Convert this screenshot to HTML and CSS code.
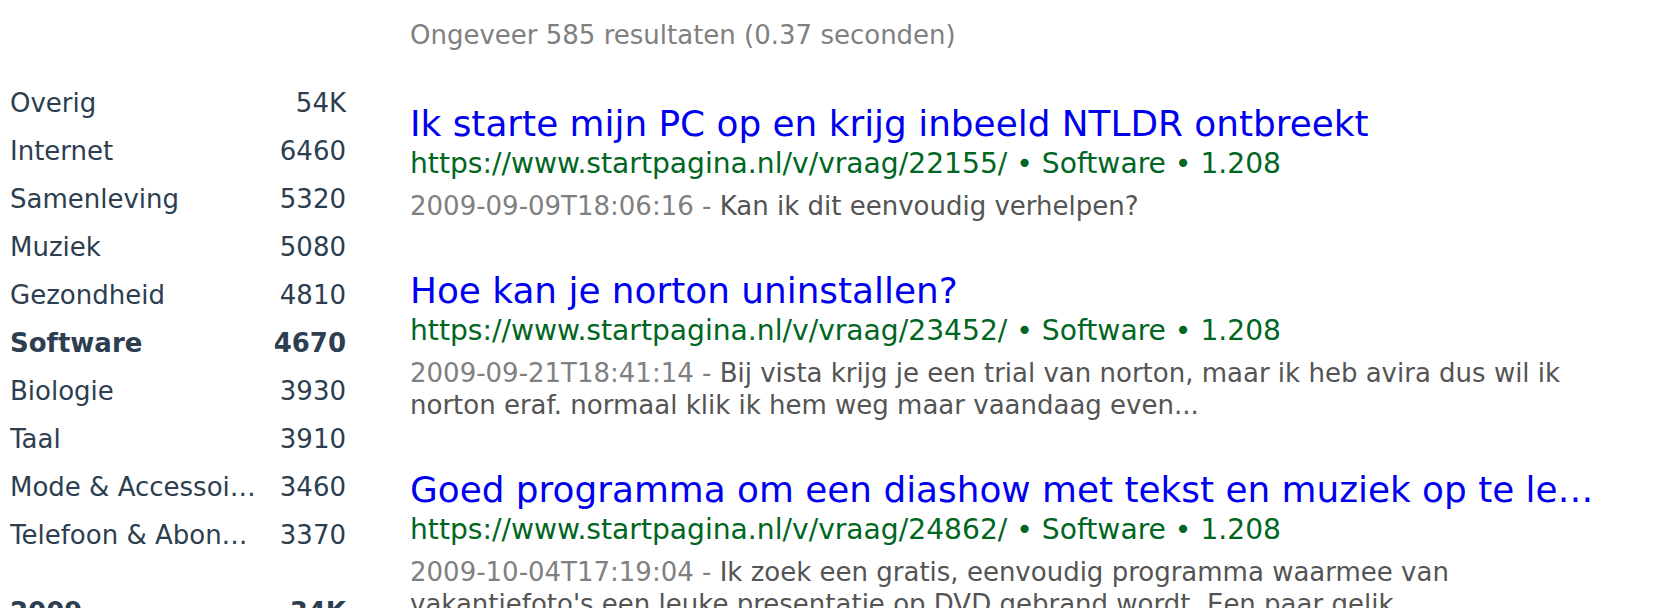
FILE: index.html
```html
<!DOCTYPE html>
<html lang="nl">
<head>
<meta charset="utf-8">
<title>Zoekresultaten</title>
<link rel="stylesheet" href="styles.css">
</head>
<body>
<div class="page">
  <aside class="facets">
    <ul class="facet-group">
      <li class="facet"><span class="facet-label">Overig</span><span class="facet-count">54K</span></li>
      <li class="facet"><span class="facet-label">Internet</span><span class="facet-count">6460</span></li>
      <li class="facet"><span class="facet-label">Samenleving</span><span class="facet-count">5320</span></li>
      <li class="facet"><span class="facet-label">Muziek</span><span class="facet-count">5080</span></li>
      <li class="facet"><span class="facet-label">Gezondheid</span><span class="facet-count">4810</span></li>
      <li class="facet facet-active"><span class="facet-label">Software</span><span class="facet-count">4670</span></li>
      <li class="facet"><span class="facet-label">Biologie</span><span class="facet-count">3930</span></li>
      <li class="facet"><span class="facet-label">Taal</span><span class="facet-count">3910</span></li>
      <li class="facet"><span class="facet-label">Mode &amp; Accessoires</span><span class="facet-count">3460</span></li>
      <li class="facet"><span class="facet-label">Telefoon &amp; Abonnementen</span><span class="facet-count">3370</span></li>
    </ul>
    <ul class="facet-group">
      <li class="facet facet-active"><span class="facet-label">2009</span><span class="facet-count">34K</span></li>
    </ul>
  </aside>
  <main class="results">
    <div class="stats">Ongeveer 585 resultaten (0.37 seconden)</div>
    <ol class="result-list">
      <li class="result">
        <a class="result-title" href="#">Ik starte mijn PC op en krijg inbeeld NTLDR ontbreekt</a>
        <div class="result-url">https://www.startpagina.nl/v/vraag/22155/ • Software • 1.208</div>
        <p class="result-snippet"><span class="result-date">2009-09-09T18:06:16 -</span> Kan ik dit eenvoudig verhelpen?</p>
      </li>
      <li class="result">
        <a class="result-title" href="#">Hoe kan je norton uninstallen?</a>
        <div class="result-url">https://www.startpagina.nl/v/vraag/23452/ • Software • 1.208</div>
        <p class="result-snippet"><span class="result-date">2009-09-21T18:41:14 -</span> Bij vista krijg je een trial van norton, maar ik heb avira dus wil ik norton eraf. normaal klik ik hem weg maar vaandaag even...</p>
      </li>
      <li class="result">
        <a class="result-title" href="#">Goed programma om een diashow met tekst en muziek op te leggen?</a>
        <div class="result-url">https://www.startpagina.nl/v/vraag/24862/ • Software • 1.208</div>
        <p class="result-snippet"><span class="result-date">2009-10-04T17:19:04 -</span> Ik zoek een gratis, eenvoudig programma waarmee van vakantiefoto's een leuke presentatie op DVD gebrand wordt. Een paar gelik...</p>
      </li>
    </ol>
  </main>
</div>
</body>
</html>
```
FILE: styles.css
```css
html, body {
  margin: 0;
  padding: 0;
  background: #ffffff;
}

body {
  font-family: "DejaVu Sans", "Noto Sans", sans-serif;
  font-size: 26px;
}

.page {
  display: flex;
  align-items: flex-start;
  gap: 64px;
  padding: 0 10px;
}

/* ---------- facets sidebar ---------- */
.facets {
  flex: none;
  width: 336px;
  padding-top: 79px;
}

.facet-group {
  list-style: none;
  margin: 0;
  padding: 0;
}

.facet-group + .facet-group {
  margin-top: 29px;
}

.facet {
  display: flex;
  line-height: 48px;
  color: #2c3e50;
}

.facet-label {
  flex: 1;
  min-width: 0;
  overflow: hidden;
  white-space: nowrap;
  text-overflow: ellipsis;
}

.facet-count {
  flex: none;
  padding-left: 21px;
  text-align: right;
}

.facet-active {
  font-weight: bold;
}

/* ---------- results ---------- */
.results {
  flex: none;
  width: 1194px;
}

.stats {
  margin-top: 20px;
  line-height: 30px;
  color: #808080;
}

.result-list {
  list-style: none;
  margin: 52px 0 0;
  padding: 0;
}

.result + .result {
  margin-top: 47px;
}

.result-title {
  display: block;
  font-size: 35.84px;
  line-height: 44px;
  color: #0000ee;
  text-decoration: none;
  white-space: nowrap;
  overflow: hidden;
  text-overflow: ellipsis;
}

.result-url {
  font-size: 28.16px;
  line-height: 36px;
  color: #006621;
}

.result-snippet {
  margin: 8px 0 0;
  line-height: 32px;
  color: #545454;
}

.result-date {
  color: #808080;
}
```
